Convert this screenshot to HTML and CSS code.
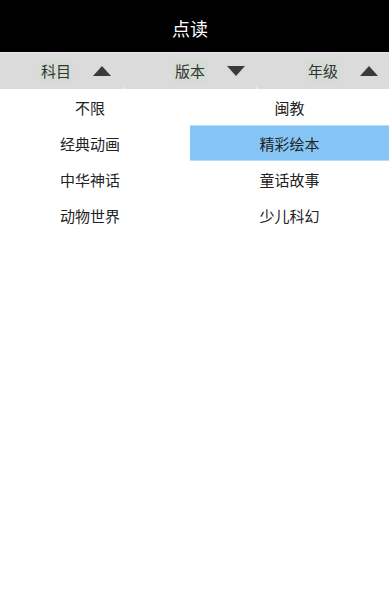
FILE: index.html
```html
<!DOCTYPE html>
<html lang="zh">
<head>
<meta charset="utf-8">
<title>点读</title>
<link rel="stylesheet" href="styles.css">
</head>
<body>
<div class="page">
  <header class="topbar">点读</header>
  <nav class="filters">
    <div class="filter filter-first">
      <span class="filter-label">科目</span>
      <span class="tri tri-up"></span>
    </div>
    <div class="filter">
      <span class="filter-label">版本</span>
      <span class="tri tri-down"></span>
    </div>
    <div class="filter">
      <span class="filter-label">年级</span>
      <span class="tri tri-up"></span>
    </div>
  </nav>
  <div class="options">
    <div class="col col-left">
      <div class="opt">不限</div>
      <div class="opt">经典动画</div>
      <div class="opt">中华神话</div>
      <div class="opt">动物世界</div>
    </div>
    <div class="col col-right">
      <div class="opt">闽教</div>
      <div class="opt opt-active">精彩绘本</div>
      <div class="opt">童话故事</div>
      <div class="opt">少儿科幻</div>
    </div>
  </div>
</div>
</body>
</html>
```

FILE: styles.css
```css
html, body {
  margin: 0;
  padding: 0;
  background: #ffffff;
}

body {
  font-family: "Noto Sans CJK SC", "Noto Sans", sans-serif;
  width: 389px;
  height: 612px;
  overflow: hidden;
}

.page {
  display: flex;
  flex-direction: column;
}

.topbar {
  height: 52px;
  background: #000000;
  color: #ffffff;
  font-size: 18px;
  display: flex;
  align-items: center;
  justify-content: center;
  padding: 3px 9px 0 0;
  box-sizing: border-box;
}

.filters {
  display: flex;
  height: 37px;
  background: #dcdbdc;
  border-top: 1px solid #ececec;
  box-sizing: border-box;
}

.filter {
  flex: 0 0 133px;
  display: flex;
  align-items: center;
  justify-content: flex-end;
  padding-right: 11px;
  gap: 20px;
  box-sizing: border-box;
  position: relative;
}

.filter-first {
  flex-basis: 123px;
  padding-right: 12px;
}

.filter + .filter::before {
  content: "";
  position: absolute;
  left: 0;
  bottom: 0;
  width: 1px;
  height: 2px;
  background: #f4f4f4;
}

.filter-label {
  font-size: 15px;
  color: #333333;
  background: #d5dcd3;
  padding: 0 2px;
  line-height: 22px;
}

.tri {
  width: 0;
  height: 0;
  border-left: 9.5px solid transparent;
  border-right: 9.5px solid transparent;
}

.tri-up {
  border-bottom: 10px solid #3a3a3a;
}

.tri-down {
  border-top: 10px solid #3a3a3a;
}

.options {
  display: flex;
}

.col {
  display: flex;
  flex-direction: column;
}

.col-left {
  width: 180px;
  margin-right: 10px;
}

.col-right {
  width: 199px;
}

.opt {
  height: 36px;
  display: flex;
  align-items: center;
  justify-content: center;
  font-size: 15px;
  color: #222222;
  box-sizing: border-box;
}

.opt-active {
  background: #85c5f5;
  border-top: 1px solid #b8dcf8;
  border-bottom: 1px solid #b8dcf8;
}
```
